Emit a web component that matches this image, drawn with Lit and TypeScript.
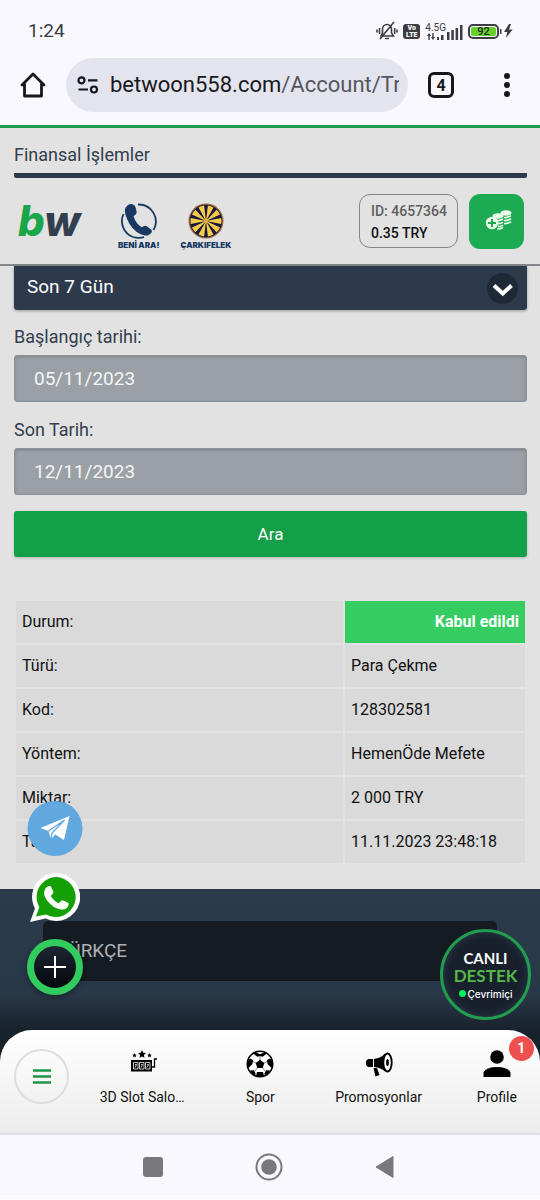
import { LitElement, html, css, svg } from "lit";
import { customElement, property, state } from "lit/decorators.js";
import { classMap } from "lit/directives/class-map.js";

const WHEEL_SLICES = Array.from({ length: 10 }, (_, i) => {
  const a = ((i * 36 + 7) * Math.PI) / 180;
  const b = ((i * 36 + 29) * Math.PI) / 180;
  const r = 15.5;
  const p = (t: number) => `${(18 + r * Math.sin(t)).toFixed(2)} ${(18 - r * Math.cos(t)).toFixed(2)}`;
  return `M18 18L${p(a)}A${r} ${r} 0 0 1 ${p(b)}Z`;
});

@customElement("status-bar")
class StatusBar extends LitElement {
  static styles = css`
    :host { display: flex; align-items: center; justify-content: space-between; height: 58px; padding: 4px 27px 0 28px; box-sizing: border-box; color: #3c3c42; }
    .time { font-size: 19px; line-height: 24px; }
    .icons { display: flex; align-items: center; gap: 5px; }
    .volte { background: #3c3c42; color: #fff; border-radius: 3px; width: 17px; height: 15px; font-size: 7px; line-height: 7px; font-weight: 900; text-align: center; box-sizing: border-box; padding-top: 1px; }
    .cell { display: flex; align-items: flex-end; gap: 1px; }
    .net { display: flex; flex-direction: column; align-items: center; font-size: 10px; line-height: 10px; }
    .battery { border: 2px solid #3c3c42; border-radius: 5px; padding: 1px; width: 31px; height: 15px; box-sizing: border-box; }
    .charge { background: #69cf2c; border-radius: 2px; height: 9px; font-size: 11px; line-height: 10px; text-align: center; font-weight: 500; color: #222; }
    svg { display: block; }
    .power { display: flex; align-items: center; gap: 1px; }
  `;
  render() {
    return html`
      <span class="time">1:24</span>
      <span class="icons">
        <svg width="22" height="20" viewBox="0 0 22 20" fill="none" stroke="#3c3c42" stroke-width="1.6">
          <path d="M5 15h12.500l-2-3V8a4.500 4.500 0 0 0-9 0v4zM9 17.500h4M18 1L4 18M3.500 7v6M1 8.500v3M18.700 7v6M21 8.500v3"/>
        </svg>
        <span class="volte">Vo<br>LTE</span>
        <span class="cell">
          <span class="net">4.5G
            <svg width="18" height="7" viewBox="0 0 18 7" fill="#3c3c42"><path d="M2 0l2 3H2.700v4H1.300V3H0zM6 7L4 4h1.300V0h1.400v4H8zM10 4h2v3h-2zM14 2h2.500v5H14z"/></svg>
          </span>
          <svg width="16" height="15" viewBox="0 0 16 15" fill="#3c3c42"><path d="M0 7h2.500v8H0zM4.300 5h2.500v10H4.300zM8.600 3h2.500v12H8.600zM13 0h2.500v15H13z"/></svg>
        </span>
        <span class="power">
          <span class="battery"><div class="charge">92</div></span>
          <svg width="13" height="15" viewBox="0 0 13 15" fill="#3c3c42"><path d="M0 5h1.500v5H0zM9 0L4 8h3.200L6 14l6.500-8.500H9L11 0z"/></svg>
        </span>
      </span>`;
  }
}

@customElement("browser-bar")
class BrowserBar extends LitElement {
  static styles = css`
    :host { display: flex; align-items: center; height: 70px; padding-bottom: 13px; padding-left: 20px; box-sizing: border-box; border-bottom: 3px solid #199f4c; color: #17181c; }
    button { border: 0; background: none; padding: 0; font: inherit; color: inherit; display: flex; align-items: center; justify-content: center; }
    .address { flex: 1; min-width: 0; margin-left: 20px; height: 54px; border-radius: 27px; background: #e4e4ef; padding: 0 9px 0 11px; justify-content: flex-start; gap: 11px; }
    .url { flex: 1; overflow: hidden; white-space: nowrap; text-align: left; font-size: 22px; line-height: 30px; }
    .path { color: #55565e; }
    .tabs { width: 26px; height: 26px; box-sizing: border-box; border: 3px solid #17181c; border-radius: 6px; margin-left: 20px; font-size: 16px; font-weight: 700; }
    .more { width: 66px; margin-left: 20px; }
    svg { display: block; flex: none; }
  `;
  render() {
    return html`
      <button aria-label="Home"><svg width="26" height="26" viewBox="0 0 26 26" fill="none" stroke="#17181c" stroke-width="2.800" stroke-linejoin="round" stroke-linecap="round"><path d="M4.500 12v12h17V12M2 13L13 2l11 11"/></svg></button>
      <button class="address" aria-label="Address">
        <svg width="22" height="18" viewBox="0 0 22 18" fill="none" stroke="#17181c" stroke-width="2.200"><circle cx="4.500" cy="4.300" r="3"/><circle cx="17" cy="13.500" r="3"/><path d="M11 4.300h9.500M1.500 13.500h9.500"/></svg>
        <span class="url">betwoon558.com<span class="path">/Account/Tr</span></span>
      </button>
      <button class="tabs" aria-label="Tabs">4</button>
      <button class="more" aria-label="More"><svg width="8" height="24" viewBox="0 0 8 24" fill="#17181c"><circle cx="4" cy="3" r="3"/><circle cx="4" cy="12" r="3"/><circle cx="4" cy="21" r="3"/></svg></button>`;
  }
}

@customElement("site-header")
class SiteHeader extends LitElement {
  static styles = css`
    :host { display: flex; align-items: center; height: 88px; box-sizing: border-box; border-bottom: 2px solid #85868a; padding: 0 16px 0 18px; }
    a { text-decoration: none; }
    .logo { width: 65px; font: italic 800 42px/44px Inter, sans-serif; color: #333f4f; }
    .b { color: #1aa64b; }
    .links { display: flex; gap: 21px; margin-left: 35px; padding-top: 10px; }
    .link { display: flex; flex-direction: column; align-items: center; gap: 1px; font: 900 8px/10px Inter, sans-serif; color: #183a62; }
    .right { margin-left: auto; display: flex; gap: 11px; align-items: center; }
    .account { display: block; box-sizing: border-box; width: 99px; height: 54px; border: 1px solid #86868a; border-radius: 11px; padding: 5px 0 0 11px; font-size: 14px; line-height: 22px; font-weight: 500; color: #111; }
    .id { display: block; color: #606060; }
    .deposit { width: 55px; height: 55px; border: 0; padding: 0; border-radius: 11px; background: #1cab52; display: flex; align-items: center; justify-content: center; }
    svg { display: block; }
    .deposit svg { margin-left: 4px; margin-bottom: 3px; }
  `;
  render() {
    return html`
      <a href="#" class="logo"><span class="b">b</span>w</a>
      <nav class="links">
        <a href="#" class="link">
          <svg width="36" height="36" viewBox="0 0 36 36"><path d="M2.500 11A17 17 0 0 0 12 34Q17 35.500 23 34.200M32.500 27A17 17 0 0 0 17 1.500" fill="none" stroke="#183a62" stroke-width="1.800"/><path d="M7 2q3-2 6 0 1 .6 1.600 2.600l1 4q.4 2-1 3l-2 1.600q2 7 8 11l2.500-1.200q1.600-.6 3 .4l4 3q1.500 1.300.5 3-2.500 3.600-7 3Q15 31 8.500 21 3 11 4 6 4.500 4 7 2z" fill="#183a62"/></svg>
          BENİ ARA!
        </a>
        <a href="#" class="link">
          <svg width="36" height="36" viewBox="0 0 36 36"><circle cx="18" cy="18" r="17.500" fill="#94683f"/><circle cx="18" cy="18" r="16.200" fill="#17163f"/>${WHEEL_SLICES.map((d) => svg`<path d=${d} fill="#f6cb48"/>`)}<circle cx="18" cy="18" r="2.500" fill="#d9a948"/></svg>
          ÇARKIFELEK
        </a>
      </nav>
      <div class="right">
        <div class="account"><span class="id">ID: 4657364</span>0.35 TRY</div>
        <button class="deposit" aria-label="Para yatır">
          <svg width="28" height="20" viewBox="0 0 28 20"><g fill="#eafbe9"><ellipse cx="21" cy="3" rx="5.500" ry="2.700"/><ellipse cx="13" cy="6" rx="5.500" ry="2.700"/></g><g fill="none" stroke="#eafbe9" stroke-width="1.700"><path d="M19 7.500q4 .5 7-1.800M19 10.500q4 .5 7-1.800M19 13.500q4 .5 7-1.800M12 10.600q3.500.3 6-1.600M13 13.600q3 .1 5-1.500M13 16.600q3 .1 5-1.500M12 19q3.500.1 6-1.500"/></g><circle cx="7" cy="13" r="6.200" fill="#eafbe9"/><path d="M7 9v8M3 13h8" stroke="#1cab52" stroke-width="2"/></svg>
        </button>
      </div>`;
  }
}

@customElement("transaction-panel")
class TransactionPanel extends LitElement {
  @state() rows: [string, string][] = [
    ["Durum:", "Kabul edildi"],
    ["Türü:", "Para Çekme"],
    ["Kod:", "128302581"],
    ["Yöntem:", "HemenÖde Mefete"],
    ["Miktar:", "2 000 TRY"],
    ["Tarih:", "11.11.2023 23:48:18"],
  ];
  static styles = css`
    :host { display: block; padding: 0 13px 24px 14px; }
    .period { display: grid; align-items: center; box-shadow: 0 1px 3px #0005; border-radius: 0 0 3px 3px; }
    .period > * { grid-area: 1 / 1; }
    .period svg { justify-self: end; margin-right: 9px; pointer-events: none; }
    select { appearance: none; width: 100%; height: 44px; border: 0; border-radius: 0 0 3px 3px; background: #2c3a4b; color: #fff; font: 19px/24px Roboto, sans-serif; padding: 0 13px 3px; }
    label { display: block; font-size: 18px; line-height: 24px; color: #323d4d; padding: 15px 0 6px; }
    input { display: block; box-sizing: border-box; width: 100%; height: 47px; margin: 0 0 1px; border: 1px solid #8c9299; border-radius: 3px; background: #9aa0a6; box-shadow: inset 0 1px 3px #0003; color: #f5f5f5; font: 19px/24px Roboto, sans-serif; padding: 0 19px; }
    .search { display: block; width: 100%; height: 46px; margin: 16px 0 42px; border: 0; border-radius: 3px; background: #149f49; color: #fff; font: 17px/24px Roboto, sans-serif; box-shadow: 0 1px 3px #0003; }
    table { width: 100%; border-collapse: separate; border-spacing: 2px; font-size: 16px; line-height: 20px; color: #111; }
    th, td { background: #dadada; padding: 11px 6px; text-align: left; font-weight: 400; }
    td { width: 168px; }
    .accepted { background: #35cc61; color: #fff; text-align: right; font-weight: 700; }
  `;
  render() {
    return html`
      <div class="period">
        <select aria-label="Dönem"><option>Son 7 Gün</option></select>
        <svg width="31" height="31" viewBox="0 0 31 31"><circle cx="15.500" cy="15.500" r="15.500" fill="#1f2935"/><path d="M7 12.500l8.800 8 8.700-8" fill="none" stroke="#fff" stroke-width="4"/></svg>
      </div>
      <label for="from">Başlangıç tarihi:</label>
      <input id="from" value="05/11/2023">
      <label for="to">Son Tarih:</label>
      <input id="to" value="12/11/2023">
      <button class="search">Ara</button>
      <table>
        <tbody>
          ${this.rows.map(([k, v], i) => html`<tr><th scope="row">${k}</th><td class=${classMap({ accepted: i === 0 })}>${v}</td></tr>`)}
        </tbody>
      </table>`;
  }
}

@customElement("site-footer")
class SiteFooter extends LitElement {
  static styles = css`
    :host { display: block; position: relative; box-sizing: border-box; padding: 32px 43px 49px; background: linear-gradient(#2c3b4c 0, #293848 75%, #18222c 100%); }
    select { display: block; appearance: none; width: 100%; height: 60px; border: 0; border-radius: 5px; background: #151b22; color: #adb0b4; font: 19px/24px Roboto, sans-serif; padding: 0 14px; }
    .contacts { position: absolute; left: 27px; bottom: 35px; display: flex; flex-direction: column; align-items: center; gap: 17px; }
    .contacts a, svg { display: block; }
    .plus { width: 56px; height: 56px; box-sizing: border-box; border: 7px solid #32cb5d; border-radius: 50%; background: linear-gradient(#1d2733, #05070b); display: flex; align-items: center; justify-content: center; padding: 0; box-shadow: 0 2px 6px #0006; }
    .support { position: absolute; right: 9px; bottom: 10px; width: 91px; height: 91px; box-sizing: border-box; border: 3px solid #229c4e; border-radius: 50%; background: #18202c; box-shadow: inset 0 0 9px #2d3b4d; padding: 2px 0 0; color: #fff; display: flex; flex-direction: column; align-items: center; justify-content: center; font: 700 15px/18px Lato, sans-serif; }
    .green { color: #54b948; font-size: 17px; }
    .online { display: flex; align-items: center; gap: 2px; font: 500 10px/18px Inter, sans-serif; }
    .dot { width: 7px; height: 7px; border-radius: 50%; background: #00f25b; }
  `;
  render() {
    return html`
      <select aria-label="Dil"><option>TÜRKÇE</option></select>
      <div class="contacts">
        <a href="#" aria-label="Telegram"><svg width="56" height="55" viewBox="0 0 55 55"><circle cx="27.500" cy="27.500" r="27.500" fill="#61a8de"/><path d="M13 27L42 15l-5.500 24-8.700-5.500-4.300 4.500-2.500-8z" fill="#fff"/><path d="M21 30l16-11-12.500 13-1 6" fill="none" stroke="#61a8de" stroke-width="1.300"/></svg></a>
        <a href="#" aria-label="WhatsApp"><svg width="50" height="49" viewBox="0 0 50 49"><path d="M26 0a24 24 0 1 1-10.500 45.500L0 49l5-13.500A24 24 0 0 1 26 0z" fill="#fff"/><path d="M26 4a20 20 0 1 1-10 37.500L6 43.500 9.300 34A20 20 0 0 1 26 4z" fill="#14a005"/><path d="M17 14l2-1q1.500-.5 2.200 1l2 4.500q.4 1.200-.5 2.200L20.800 23q2.700 5 8 7.200l2.400-2.500q.8-.8 2-.3l4.800 2.300q1 .6.700 1.700-1.400 5.600-7.700 5-8-1.300-13.500-8.500-5-6.500-2.800-11 .8-2 2.300-2.900z" fill="#fff"/></svg></a>
        <button class="plus" aria-label="İletişim"><svg width="22" height="22" viewBox="0 0 22 22" stroke="#fff" stroke-width="2"><path d="M11 0v22M0 11h22"/></svg></button>
      </div>
      <button class="support">
        <span>CANLI</span><span class="green">DESTEK</span><span class="online"><span class="dot"></span>Çevrimiçi</span>
      </button>`;
  }
}

const ICONS = {
  slot: svg`<g fill="#000"><path d="M14 0l1.200 2.700 2.800.3-2.100 2 .6 2.800L14 6.400l-2.500 1.400.6-2.800L10 3l2.800-.3zM6.500 3l.7 1.500 1.500.2-1.100 1.100.3 1.600-1.400-.8-1.400.8.3-1.600-1.100-1.100 1.500-.2zM21.500 3l.7 1.500 1.500.2-1.100 1.100.3 1.600-1.400-.8-1.400.8.3-1.600-1.100-1.100 1.500-.2zM3 10h21v11.500H3z"/></g><g fill="none" stroke="#ddd" stroke-width=".9"><path d="M5.500 12.500h4.500v6.500H5.500zM11.500 12.500h4.500v6.500h-4.500zM17.500 12.500h4.500v6.500h-4.500zM7 14.500h1.500L7.200 17.500M13 14.500h1.500l-1.300 3M19 14.500h1.500l-1.300 3"/></g><path d="M24 17h2.500V9H29" fill="none" stroke="#000" stroke-width="1.300"/>`,
  ball: svg`<circle cx="14" cy="14" r="12.700" fill="#fff" stroke="#000" stroke-width="1.600"/><path d="M14 9.800l4.300 3.100-1.600 5h-5.400l-1.600-5zM9 2l5 2.300L19 2l1.300 2-3.600 2.700L14 6l-2.700.7L7.700 4zM1 12l3-3.500L7 10l-.5 4L3 17.500H1.200zM27 12l-3-3.500-3 1.500.5 4 3.500 3.500h1.800zM4 20.500l4-.2 1.800 4-2.800 1.500zM24 20.500l-4-.2-1.800 4 2.800 1.500zM11 22h6l1 4h-8z" fill="#000"/><path d="M14 10V6M18 13l4-2M16.500 17.500L19 21M11.500 17.500L9 21M10 13l-4-2" stroke="#000" stroke-width=".5"/>`,
  promo: svg`<path d="M3 9h5v8H3l-2-2v-4zM9 9q7-1 11-5.500v18Q16 17.500 9 17zM8.500 18h3.500l2.500 7-4 1.500z"/><ellipse cx="22.500" cy="12.500" rx="4.200" ry="9" fill="#fff" stroke="#000" stroke-width="1.900"/><ellipse cx="22.500" cy="12.500" rx="1.400" ry="3.500"/>`,
  profile: svg`<circle cx="14" cy="7" r="6.800"/><path d="M.500 27v-4.500Q3 17 14 17t13.500 5.500V27z"/>`,
};

@customElement("bottom-nav")
class BottomNav extends LitElement {
  @property({ type: Number }) unread = 1;
  static styles = css`
    :host { display: block; background: #18222c; }
    .bar { display: flex; align-items: flex-start; height: 105px; box-sizing: border-box; border-radius: 32px 32px 0 0; border-bottom: 2px solid #dfdfe2; background: linear-gradient(#fff, #ececec); padding-left: 14px; overflow: hidden; }
    .menu { flex: none; width: 55px; height: 55px; margin-top: 19px; border: 2px solid #ddd; border-radius: 50%; background: none; padding: 0; display: flex; align-items: center; justify-content: center; }
    .items { flex: 1; display: grid; grid-template-columns: repeat(4, 1fr); margin: 20px -16px 0 14px; }
    .item { display: flex; flex-direction: column; align-items: center; gap: 9px; text-decoration: none; color: #111; font-size: 14px; line-height: 20px; white-space: nowrap; }
    .icon { position: relative; }
    .badge { position: absolute; left: 26px; top: -14px; width: 25px; height: 25px; border-radius: 50%; background: #ee5050; color: #fff; font-size: 14px; line-height: 25px; font-weight: 700; text-align: center; }
    svg { display: block; }
  `;
  render() {
    const items: [string, unknown][] = [
      ["3D Slot Salo…", ICONS.slot],
      ["Spor", ICONS.ball],
      ["Promosyonlar", ICONS.promo],
      ["Profile", ICONS.profile],
    ];
    return html`<nav class="bar">
      <button class="menu" aria-label="Menü"><svg width="18" height="15" viewBox="0 0 18 15" stroke="#209746" stroke-width="2.400"><path d="M0 1.500h18M0 7.500h18M0 13.500h18"/></svg></button>
      <div class="items">
        ${items.map(([label, icon], i) => html`<a href="#" class="item"><span class="icon"><svg width="28" height="28" viewBox="0 0 28 28" overflow="visible">${icon}</svg>${i === 3 ? html`<span class="badge">${this.unread}</span>` : ""}</span>${label}</a>`)}
      </div>
    </nav>`;
  }
}

@customElement("system-nav")
class SystemNav extends LitElement {
  static styles = css`
    :host { display: flex; justify-content: center; align-items: center; gap: 92px; height: 64px; padding-right: 2px; box-sizing: border-box; }
    button { border: 0; padding: 0; background: none; }
    svg { display: block; }
  `;
  render() {
    return html`
      <button aria-label="Recent"><svg width="20" height="20"><rect width="20" height="20" rx="3" fill="#79787c"/></svg></button>
      <button aria-label="Home"><svg width="28" height="28" viewBox="0 0 28 28"><circle cx="14" cy="14" r="12.500" fill="none" stroke="#79787c" stroke-width="2"/><circle cx="14" cy="14" r="7.800" fill="#79787c"/></svg></button>
      <button aria-label="Back"><svg width="20" height="24" viewBox="0 0 20 24"><path d="M1 12L18 1.500v21z" fill="#79787c" stroke="#79787c" stroke-linejoin="round"/></svg></button>`;
  }
}

@customElement("app-root")
class AppRoot extends LitElement {
  static styles = css`
    :host { display: block; background: #f9f8ff; font-family: Roboto, sans-serif; }
    .page { background: #e2e2e2; }
    .title { margin: 0 13px 0 14px; padding: 15px 0 6px; border-bottom: 5px solid #2c3a4b; font-size: 18px; line-height: 24px; font-weight: 400; color: #323d4d; border-radius: 0 0 2px 2px; }
  `;
  render() {
    return html`
      <status-bar></status-bar>
      <browser-bar></browser-bar>
      <main class="page">
        <h1 class="title">Finansal İşlemler</h1>
        <site-header></site-header>
        <transaction-panel></transaction-panel>
        <site-footer></site-footer>
      </main>
      <bottom-nav></bottom-nav>
      <system-nav></system-nav>`;
  }
}
